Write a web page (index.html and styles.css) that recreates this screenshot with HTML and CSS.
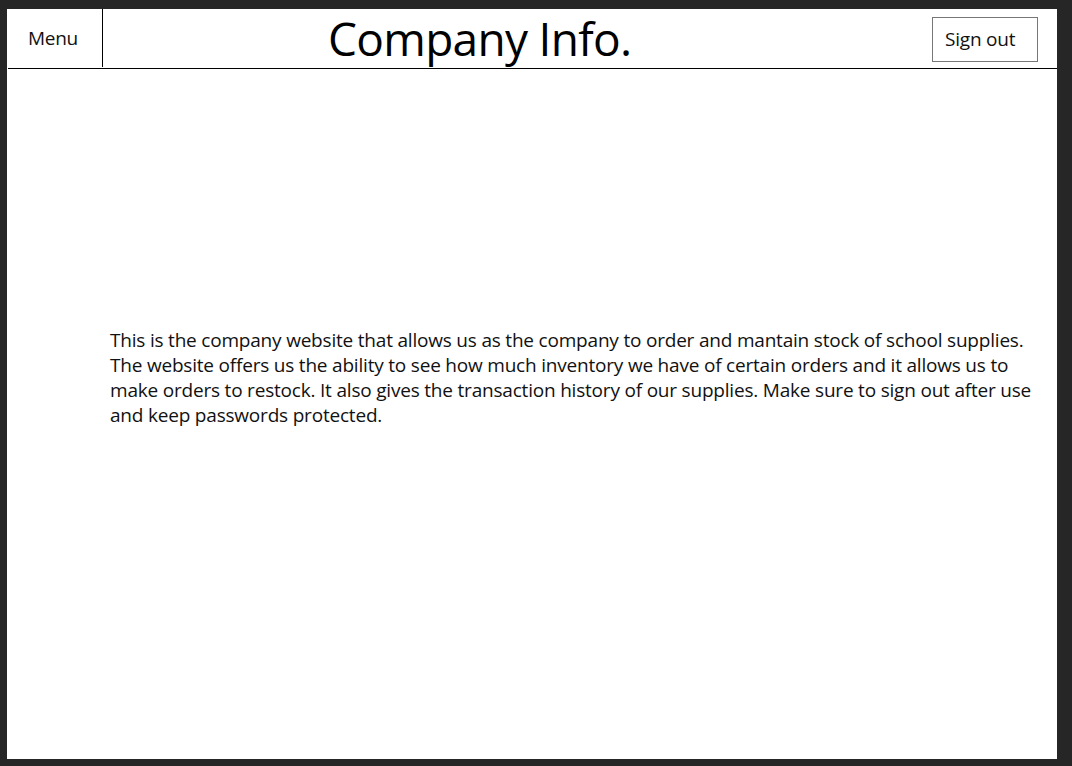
FILE: index.html
```html
<!DOCTYPE html>
<html>
<head>
<meta charset="utf-8">
<link rel="stylesheet" href="styles.css">
</head>
<body>
<div class="page">
  <header class="topbar">
    <div class="menu">Menu</div>
    <h1 class="title">Company Info.</h1>
    <div class="signout">Sign out</div>
  </header>
  <main class="content">
    <p class="about">This is the company website that allows us as the company to order and mantain stock of school supplies.<br>The website offers us the ability to see how much inventory we have of certain orders and it allows us to<br>make orders to restock. It also gives the transaction history of our supplies. Make sure to sign out after use<br>and keep passwords protected.</p>
  </main>
</div>
</body>
</html>
```
FILE: styles.css
```css
html, body {
  margin: 0;
  padding: 0;
  background: #262626;
  width: 1072px;
  height: 766px;
  overflow: hidden;
}
.page {
  margin: 9px 0 0 7px;
  width: 1050px;
  height: 750px;
  background: #ffffff;
  display: flex;
  flex-direction: column;
  font-family: "Open Sans", "Noto Sans", sans-serif;
  color: #111;
}
.topbar {
  height: 60px;
  border-bottom: 1px solid #000;
  margin-left: 1px;
  display: flex;
  align-items: stretch;
  box-sizing: border-box;
}
.menu {
  width: 95px;
  border-right: 1px solid #000;
  display: flex;
  align-items: center;
  justify-content: center;
  font-size: 19px;
  letter-spacing: -0.3px;
  margin-bottom: 1px;
  padding-right: 4px;
  box-sizing: border-box;
}
.title {
  margin: 0 0 0 225px;
  font-weight: normal;
  font-size: 46px;
  letter-spacing: -0.7px;
  line-height: 58px;
  flex: 1;
  color: #000;
}
.signout {
  align-self: flex-start;
  margin: 8px 19px 0 0;
  width: 106px;
  height: 45px;
  box-sizing: border-box;
  border: 1px solid #777;
  display: flex;
  align-items: center;
  justify-content: flex-start;
  padding: 0 0 2px 12px;
  font-size: 19px;
  letter-spacing: -0.2px;
}
.content {
  flex: 1;
  padding: 0 0 0 103px;
}
.about {
  margin: 259px 0 0 0;
  font-size: 19px;
  line-height: 25px;
  letter-spacing: -0.2px;
  white-space: nowrap;
  color: #111;
}
```
